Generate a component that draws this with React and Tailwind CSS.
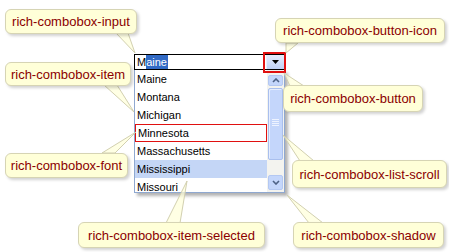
import React from "react";

const items = ["Maine", "Montana", "Michigan", "Minnesota", "Massachusetts", "Mississippi", "Missouri"];

function Callout({ className, children }) {
  return (
    <div
      className={
        "absolute flex items-center justify-center rounded-[6px] border border-[#d6d4b4] bg-[#ffffd8] text-[13px] leading-none text-[#8b0000] shadow-[2px_2px_3px_rgba(0,0,0,0.18)] " +
        className
      }
    >
      {children}
    </div>
  );
}

const tails = [
  [[116, 33], [128, 33], [135, 53]],
  [[104, 85], [117, 85], [134, 112]],
  [[102, 153], [115, 153], [136, 132]],
  [[286, 43], [298, 43], [286, 53]],
  [[290, 86], [304, 86], [284, 73]],
  [[300, 161], [314, 161], [283, 135]],
  [[309, 223], [323, 223], [287, 195]],
  [[166, 223], [180, 223], [187, 181]],
];

export default function App() {
  return (
    <div className="relative h-[252px] w-[449px] overflow-hidden bg-white" style={{ fontFamily: '"Liberation Sans", Arial, sans-serif' }}>
      {/* Combobox */}
      <div className="ml-[134px] pt-[54px] w-[151px]">
        <div className="relative">
          <div className="flex h-[16px] items-stretch border border-black bg-white">
            <div className="flex flex-1 items-center pl-[2px] text-[11px] leading-none text-black">
              <span>M</span>
              <span className="flex h-[14px] items-center bg-[#316ac5] pr-[1px] text-white">aine</span>
            </div>
            <div className="flex w-[18px] items-center justify-center border-l border-[#e8eefb] bg-gradient-to-b from-[#e6edfc] to-[#bfd0f5]">
              <svg width="7" height="4" viewBox="0 0 7 4"><path d="M0 0h7L3.5 4z" fill="#000" /></svg>
            </div>
          </div>
          <div className="absolute left-[129px] top-[-2px] h-[21px] w-[23px] border-2 border-[#e01010]" />
        </div>
        <div className="flex h-[123px] border border-t-0 border-[#8fa8d0] bg-white shadow-[3px_3px_3px_rgba(0,0,0,0.3)]">
          <div className="flex-1 overflow-hidden text-[11px] leading-none text-black">
            {items.map((it, i) => (
              <div
                key={it}
                className={
                  "flex h-[18px] shrink-0 items-center pl-[2px] " +
                  (i === 3 ? "border border-[#e01010] pl-[1px] " : "") +
                  (i === 5 ? "bg-[#c4d6f6] " : "")
                }
              >
                {it}
              </div>
            ))}
          </div>
          <div className="flex w-[17px] flex-col bg-[#f3f3ef] px-[1px] pt-[5px] pb-[2px]">
            <div className="flex h-[11px] items-center justify-center rounded-[2px] border border-[#b4c8f2] bg-[#c4d6fb]">
              <svg width="8" height="5" viewBox="0 0 8 5"><path d="M1 4L4 1L7 4" stroke="#4d6185" strokeWidth="1.6" fill="none" /></svg>
            </div>
            <div className="mt-[2px] flex h-[72px] items-start justify-center rounded-[2px] border border-[#a9bfee] bg-[#c4d6fb] pt-[30px] shadow-[inset_1px_1px_0_#e6eeff]">
              <svg width="7" height="7" viewBox="0 0 7 7">
                <path d="M0 0.5h7M0 2.5h7M0 4.5h7M0 6.5h7" stroke="#eef3ff" strokeWidth="1" />
              </svg>
            </div>
            <div className="flex-1" />
            <div className="flex h-[15px] items-center justify-center rounded-[2px] border border-[#b4c8f2] bg-[#c4d6fb]">
              <svg width="8" height="5" viewBox="0 0 8 5"><path d="M1 1L4 4L7 1" stroke="#4d6185" strokeWidth="1.6" fill="none" /></svg>
            </div>
          </div>
        </div>
      </div>

      {/* Tails */}
      <svg className="pointer-events-none absolute left-0 top-0" width="449" height="252">
        {tails.map((p, i) => (
          <polygon
            key={i}
            points={p.map((q) => q.join(",")).join(" ")}
            fill="#ffffd8"
            fillOpacity="0.7"
            stroke="#d2d0b0"
            strokeWidth="1"
          />
        ))}
      </svg>

      <Callout className="left-[5px] top-[9px] h-[25px] w-[132px]">rich-combobox-input</Callout>
      <Callout className="left-[5px] top-[62px] h-[24px] w-[126px]">rich-combobox-item</Callout>
      <Callout className="left-[5px] top-[153px] h-[25px] w-[123px]">rich-combobox-font</Callout>
      <Callout className="left-[275px] top-[18px] h-[25px] w-[170px]">rich-combobox-button-icon</Callout>
      <Callout className="left-[283px] top-[85px] h-[27px] w-[140px]">rich-combobox-button</Callout>
      <Callout className="left-[292px] top-[160px] h-[28px] w-[155px]">rich-combobox-list-scroll</Callout>
      <Callout className="left-[293px] top-[222px] h-[26px] w-[151px]">rich-combobox-shadow</Callout>
      <Callout className="left-[78px] top-[222px] h-[26px] w-[187px]">rich-combobox-item-selected</Callout>
    </div>
  );
}
